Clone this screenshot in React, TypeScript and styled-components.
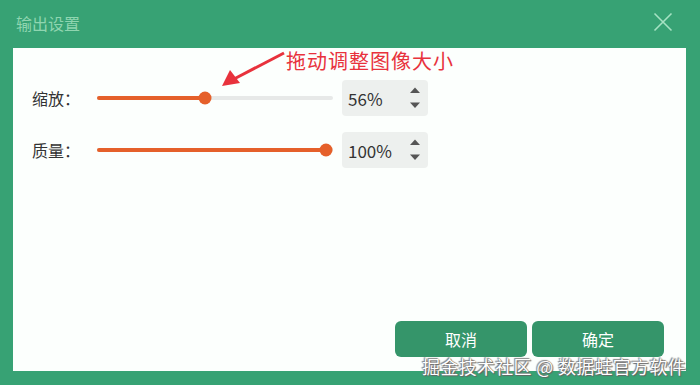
import React, { FC } from 'react';
import styled, { createGlobalStyle } from 'styled-components';

const GREEN = '#37a274';
const ORANGE = '#e5602a';
const TEXT = '#333333';

const GlobalStyle = createGlobalStyle`
    html, body {
        margin: 0;
        padding: 0;
        background: ${GREEN};
    }
    body {
        font-family: "Noto Sans CJK SC", "Noto Sans", sans-serif;
    }
`;

interface ISetting {
    label: string,
    value: number,
    min: number,
}

const settings: ISetting[] = [
    { label: '缩放：', value: 56, min: 17 },
    { label: '质量：', value: 100, min: 1 },
];

// usable length of the track (the thumb never reaches its right end)
const RUN = 229;

const Slider: FC<{ value: number, min: number }> = ({ value, min }) => {
    var pos = ((value - min) / (100 - min)) * RUN;
    return (
        <Track>
            <Fill style={{ width: `${pos}px` }} />
            <Thumb style={{ left: `${pos}px` }} />
        </Track>
    );
};

const Spinner: FC<{ value: number }> = ({ value }) => (
    <NumberBox>
        <span>{value}%</span>
        <Arrows>
            <svg width="12" height="24" viewBox="0 0 12 24">
                <polygon points="1,7 6,1.5 11,7" fill="#555" />
                <polygon points="1,16.5 11,16.5 6,22" fill="#555" />
            </svg>
        </Arrows>
    </NumberBox>
);

const App: FC = () => {
    return (
        <>
            <GlobalStyle />
            <Dialog>
                <Header>
                    <Title>输出设置</Title>
                    <Close>
                        <svg width="20" height="20" viewBox="0 0 20 20">
                            <path d="M1.5 1.5 L18.5 18.5 M18.5 1.5 L1.5 18.5" stroke="#a6e2c3" strokeWidth="1.6" fill="none" />
                        </svg>
                    </Close>
                </Header>
                <Body>
                    <Annotation>
                        <svg width="66" height="40" viewBox="0 0 66 40">
                            <path d="M64 4 L14 30" stroke="#e8323c" strokeWidth="3" fill="none" />
                            <polygon points="2,37 10,21 20,34" fill="#e8323c" />
                        </svg>
                        <AnnotationText>拖动调整图像大小</AnnotationText>
                    </Annotation>
                    <Rows>
                        {settings.map((s) => (
                            <Row key={s.label}>
                                <Label>{s.label}</Label>
                                <Slider value={s.value} min={s.min} />
                                <Spinner value={s.value} />
                            </Row>
                        ))}
                    </Rows>
                    <Footer>
                        <Button>取消</Button>
                        <Button>确定</Button>
                    </Footer>
                    <Watermark>掘金技术社区 @ 数据蛙官方软件</Watermark>
                </Body>
            </Dialog>
        </>
    );
};

const Dialog = styled.div`
    width: 700px;
    height: 385px;
    display: flex;
    flex-direction: column;
    background: ${GREEN};
    overflow: hidden;
`;

const Header = styled.div`
    height: 48px;
    display: flex;
    align-items: center;
    justify-content: space-between;
    padding: 0 27px 0 16px;
    box-sizing: border-box;
`;

const Title = styled.div`
    color: #8fd5b0;
    font-size: 16px;
    margin-top: -2px;
`;

const Close = styled.div`
    display: flex;
    margin-top: -4px;
`;

const Body = styled.div`
    position: relative;
    flex: 1;
    margin: 0 14px 14px 13px;
    background: #fcfffd;
    display: flex;
    flex-direction: column;
    padding: 32px 22px 14px 19px;
`;

const Annotation = styled.div`
    position: absolute;
    left: 207px;
    top: 1px;
    display: flex;
    align-items: flex-start;
`;

const AnnotationText = styled.div`
    color: #e8323c;
    font-size: 20px;
    line-height: 24px;
    margin-left: 0;
    letter-spacing: 1px;
`;

const Rows = styled.div`
    display: flex;
    flex-direction: column;
    gap: 16px;
`;

const Row = styled.div`
    display: flex;
    align-items: center;
    height: 36px;
`;

const Label = styled.div`
    width: 65px;
    font-size: 16px;
    color: ${TEXT};
`;

const Track = styled.div`
    position: relative;
    width: 236px;
    height: 4px;
    margin-right: 9px;
    border-radius: 2px;
    background: #e7e9e8;
`;

const Fill = styled.div`
    height: 100%;
    border-radius: 2px;
    background: ${ORANGE};
`;

const Thumb = styled.div`
    position: absolute;
    top: 50%;
    width: 13px;
    height: 13px;
    border-radius: 50%;
    background: ${ORANGE};
    transform: translate(-50%, -50%);
`;

const NumberBox = styled.div`
    width: 86px;
    height: 36px;
    box-sizing: border-box;
    padding: 0 7px 0 6px;
    border-radius: 4px;
    background: #edf0ee;
    display: flex;
    align-items: center;
    justify-content: space-between;
    font-size: 17px;
    color: ${TEXT};
`;

const Arrows = styled.div`
    display: flex;
`;

const Footer = styled.div`
    margin-top: auto;
    display: flex;
    justify-content: flex-end;
    gap: 5px;
`;

const Button = styled.div`
    width: 132px;
    height: 36px;
    border-radius: 6px;
    background: #35956a;
    color: #ffffff;
    font-size: 16px;
    display: flex;
    align-items: center;
    justify-content: center;
`;

const Watermark = styled.div`
    position: absolute;
    right: 0;
    bottom: -8px;
    font-size: 18px;
    color: #ffffff;
    letter-spacing: 0.3px;
    text-shadow: 0 0 1px #555, 1px 1px 1px #666, -1px -1px 1px #888;
`;

export default App;
